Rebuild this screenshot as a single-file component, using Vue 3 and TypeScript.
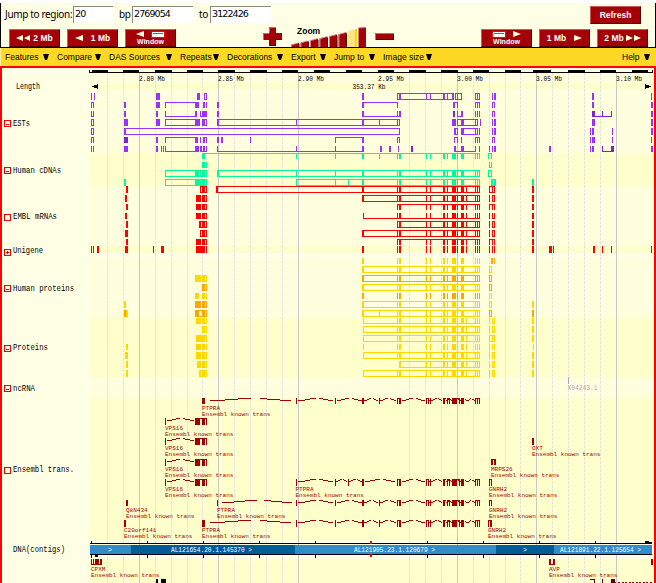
<script setup lang="ts">
interface Menu { label: string; w: number }
interface Row { y: number; h: number; c: string; d: string }
interface Label { x: number; y: number; t: string; w?: number }

const menus: Menu[] = [
  { label: 'Features', w: 44 }, { label: 'Compare', w: 44 }, { label: 'DAS Sources', w: 63 },
  { label: 'Repeats', w: 39 }, { label: 'Decorations', w: 56 }, { label: 'Export', w: 35 },
  { label: 'Jump to', w: 41 }, { label: 'Image size', w: 49 },
]

const PURPLE = '#9b30ff', INDIGO = '#7a26cc', GREEN = '#00fa9a', RED = '#ff0000'
const GOLD = '#ffd700', ORANGE = '#ffa500'

// Shared exon columns; W adds the extra exon seen in some tracks.
const X = 'b397,1 b399,2 b426,1 b430,1 b443,2 b447,1 b452,4 b457,1 b461,3 b475,1 b477,1 b479,1 '
const W = X + 'b466,1 '

// Tokens: bX,W solid bar; oA-B full box; nA-B box open at the bottom; uA-B box open at the top.
function shape(d: string, y: number, h: number): string {
  return d.trim().split(/\s+/).map((t) => {
    const [a, b] = t.slice(1).split(/[,-]/).map(Number)
    const r = (x: number, yy: number, w: number, hh: number) => `M${x} ${yy}h${w}v${hh}h${-w}z`
    if (t[0] === 'b') return r(a, y, b, h)
    let s = r(a, y, 1, h) + r(b - 1, y, 1, h)
    if (t[0] !== 'u') s += r(a, y, b - a, 1)
    if (t[0] !== 'n') s += r(a, y + h - 1, b - a, 1)
    return s
  }).join('')
}

const rows: Row[] = [
  { y: 93, h: 7, c: PURPLE, d: 'b91,1 b94,1 b156,4 b197,3 o204-207 b362,2 o397-454 b399,2 b426,1 b430,1 b443,2 b447,1 b452,2 o455-462 b457,1 o475-480 b477,1 b492,1 b494,2 b592,2 b651,1' },
  { y: 102, h: 6, c: PURPLE, d: 'n91-94 b124,2 b156,4 n165-198 b195,4 b203,2 b206,1 b217,2 b362,2 n362-398 b453,2 n453-458 n475-480 b477,1 n492-495 b592,2 b651,2' },
  { y: 111, h: 6, c: PURPLE, d: 'u91-94 b124,2 b156,2 u165-197 b195,2 u200-203 b203,2 b205,2 b217,2 b362,2 u362-400 b397,1 b399,2 b461,2 u457-463 b475,1 b477,1 b479,1 n492-495 b651,2' },
  { y: 111, h: 6, c: INDIGO, d: 'b453,2 b592,3 u592-612 b602,1' },
  { y: 119, h: 7, c: PURPLE, d: 'b91,1 o91-94 b124,4 b156,4 o165-198 b195,5 b202,3 o202-207 o217-400 b217,2 b296,1 b362,2 b379,1 b397,1 b452,4 o457-478 b461,3 b475,1 b477,1 b480,1 b492,1 b494,2 b592,3 b651,2' },
  { y: 128, h: 7, c: PURPLE, d: 'o91-94 o124-400 b124,2 o454-458 b454,2 o461-478 b461,3 b475,1 b479,1 b492,1 b494,2 b590,1 b592,2 b612,1 b651,2' },
  { y: 137, h: 6, c: PURPLE, d: 'n91-94 b156,2 n165-198 b195,2 b200,1 n203-207 b203,2 b217,2 b221,2 b250,1 n335-364 b362,2 n397-400 n454-458 b461,1 n475-480 b477,1 n492-495 b590,1 b592,3 b612,1 b651,1' },
  { y: 137, h: 6, c: INDIGO, d: 'b124,4' },
  { y: 146, h: 6, c: PURPLE, d: 'b91,1 b93,1 b124,4 b156,2 b161,1 b163,1 u165-198 b195,4 b200,1 u201-207 b203,2 u217-364 b296,1 b335,1 b362,2 b380,2 b389,2 b398,1 u454-476 b454,2 b461,3 b479,1 b489,1 b492,1 b494,2 b549,2 b590,1 b592,2 b651,2' },
  { y: 146, h: 6, c: INDIGO, d: 'b411,2 u602-613 b611,3' },

  { y: 153, h: 6, c: GREEN, d: X + 'b202,3' },
  { y: 153, h: 6, c: GREEN, d: 'n202-480 b296,1 b335,1 b362,2 b379,1 n488-492' },
  { y: 162, h: 6, c: GREEN, d: 'b202,3 u202-207 u489-492' },
  { y: 170, h: 7, c: GREEN, d: X + 'o165-207 b195,4 b200,1 b202,3 o217-480 b217,2 b296,1 b335,1 b362,2 o488-492' },
  { y: 179, h: 7, c: GREEN, d: X + 'b124,2 o165-207 b195,6 b202,3 o296-480 b335,1 b348,1 b362,2 b491,2 o491-496 b494,2 b532,2' },

  { y: 186, h: 7, c: RED, d: W + 'b126,2 o200-207 b202,3 o216-480 b216,2 b362,2 o489-495 b492,1 b532,2' },
  { y: 195, h: 7, c: RED, d: W + 'b125,2 b196,5 o202-207 b202,3 o362-480 b362,2 b489,1 o492-495 b532,2' },
  { y: 204, h: 6, c: RED, d: W + 'b126,2 b196,5 o202-207 b202,3 n397-480 n489-495 b492,1 b532,2' },
  { y: 213, h: 6, c: RED, d: W + 'b125,2 b196,5 o202-207 b202,3 u363-480 b489,1 u492-495 b532,2' },
  { y: 221, h: 7, c: RED, d: W + 'b126,2 o199-207 b200,1 b202,3 o397-480 b489,1 o492-495 b532,2' },
  { y: 230, h: 7, c: RED, d: W + 'b125,3 o200-207 b202,3 o362-480 b362,2 b489,1 o492-495 b532,2' },
  { y: 239, h: 6, c: RED, d: W + 'b126,2 b196,5 o202-207 b202,3 n397-480 n489-495 b492,1 b532,2' },
  { y: 246, h: 7, c: RED, d: W + 'b91,1 b93,1 b97,2 b125,3 b153,1 b161,3 b196,9 b206,1 b362,2 b489,1 b492,1 b494,1 b532,2 b549,3 b553,1 b593,2 b602,1 b611,1 b651,1' },

  { y: 258, h: 6, c: GOLD, d: X + 'b362,2' },
  { y: 258, h: 6, c: ORANGE, d: 'b491,2 b494,1' },
  { y: 266, h: 7, c: GOLD, d: X + 'o362-480 b362,2 o489-492' },
  { y: 275, h: 7, c: ORANGE, d: X + 'o362-480 b362,2 o489-492' },
  { y: 275, h: 7, c: GOLD, d: 'b195,6 o202-207 b202,3' },
  { y: 284, h: 7, c: GOLD, d: X + 'o362-480 b362,2' },
  { y: 284, h: 7, c: ORANGE, d: 'b202,3 o202-207 o489-492' },
  { y: 293, h: 6, c: ORANGE, d: X + 'b362,2' },
  { y: 293, h: 6, c: GOLD, d: 'b195,4 b202,3 b206,1 b489,1 b491,1' },
  { y: 301, h: 7, c: GOLD, d: X + 'b124,2 o362-480 b362,2 o489-492 b532,2' },
  { y: 301, h: 7, c: ORANGE, d: 'b195,6 b202,3 o202-207' },
  { y: 310, h: 7, c: GOLD, d: X + 'b126,2 o362-480 b362,2 b379,1' },
  { y: 310, h: 7, c: ORANGE, d: 'b124,2 o195-207 b195,4 b202,3 o489-492 b532,2' },

  { y: 318, h: 6, c: GOLD, d: W + 'b196,5 u202-207 b202,3 u363-480 b489,1 u492-495 b532,2' },
  { y: 326, h: 7, c: GOLD, d: W + 'b202,3 o202-207 o363-480 b489,1 o492-495 b532,2' },
  { y: 335, h: 7, c: GOLD, d: W + 'b196,9 o202-207 o363-480 o489-495 b492,1 b532,2' },
  { y: 344, h: 6, c: GOLD, d: W + 'b126,2 b196,5 b202,3 b206,1 b363,1 b489,1 b492,1 b494,1 b533,1' },
  { y: 352, h: 7, c: GOLD, d: W + 'b125,3 b196,5 o202-207 b202,3 o363-480 b489,1 o492-495 b532,2' },
  { y: 361, h: 7, c: GOLD, d: W.replace('b397,1 ', '') + 'b126,2 b197,4 o202-207 b202,3 o399-480 b489,1 o492-495 b532,2' },
  { y: 370, h: 7, c: GOLD, d: W + 'b126,2 o199-207 b200,1 b202,3 o363-480 b489,1 o492-495 b532,2' },
]

// Transcript exons and the humped introns that join them.
const MAROON = '#a00000'
const vps = 'b165,1 b195,4 n199-207 b202,2 b204,1'
const tail = 'n397-401 b399,2 b426,1 n426-429 b430,1 b443,2 n447-450 b452,4 n456-460 b461,3 n475-480 b477,1 '
const exons: Row[] = [
  { y: 398, h: 6, c: MAROON, d: tail + 'b202,3 b296,1 b335,1 b362,2 b379,1' },
  ...[418, 438, 459, 479].map((y) => ({ y, h: 7, c: MAROON, d: vps })),
  { y: 438, h: 7, c: MAROON, d: 'b532,2' },
  { y: 459, h: 6, c: MAROON, d: 'n491-496 b491,2 b494,2' },
  { y: 479, h: 7, c: MAROON, d: tail + 'b296,1 b335,1 b348,1 b362,2 n489-492' },
  { y: 500, h: 6, c: MAROON, d: tail + 'b126,2 b217,1 b296,1 b335,1 b362,2 b379,1 n489-492' },
  { y: 520, h: 7, c: MAROON, d: tail + 'b124,2 b202,3 b296,1 b335,1 b362,2 b379,1 n488-492 b490,2' },
  { y: 559, h: 6, c: MAROON, d: 'u91-102 b93,1 b95,4 b100,1 u549-555 b549,2 b553,2 b651,2' },
]
const tailStops = [400, 426, 430, 443, 447, 452, 461, 467, 475]
function humps(y: number, xs: number[]): string {
  let s = ''
  for (let i = 0; i < xs.length - 1; i++) {
    const a = xs[i], g = xs[i + 1] - a
    if (g < 4) continue
    const p = (f: number) => Math.round(a + g * f)
    s += `M${p(0.06)} ${y + 2.5}H${p(0.22)}M${p(0.22)} ${y + 1.5}H${p(0.36)}M${p(0.36)} ${y + 0.5}H${p(0.5)}`
    s += `M${p(0.6)} ${y + 0.5}H${p(0.68)}M${p(0.68)} ${y + 1.5}H${p(0.82)}M${p(0.82)} ${y + 2.5}H${p(0.95)}`
  }
  return s
}
const introns: string[] = [
  humps(398, [205, 296, 335, 363, 379, 397, ...tailStops]),
  ...[418, 438, 459, 479].map((y) => humps(y, [165, 195])),
  humps(479, [296, 335, 348, 363, 397, ...tailStops]),
  humps(500, [217, 296, 335, 363, 379, 397, ...tailStops]),
  humps(520, [205, 296, 335, 363, 379, 397, ...tailStops]),
]

const genes: Label[] = [
  { x: 202, y: 398, t: 'PTPRA' },
  { x: 165, y: 418, t: 'VPS16' }, { x: 165, y: 438, t: 'VPS16' }, { x: 165, y: 459, t: 'VPS16' }, { x: 165, y: 479, t: 'VPS16' },
  { x: 532, y: 438, t: 'OXT' }, { x: 491, y: 459, t: 'MRPS26' },
  { x: 295.5, y: 479, t: 'PTPRA' }, { x: 489, y: 479, t: 'GNRH2' }, { x: 489, y: 500, t: 'GNRH2' },
  { x: 126, y: 500, t: 'Q8N434' }, { x: 217, y: 500, t: 'PTPRA' },
  { x: 124, y: 520, t: 'C20orf141' }, { x: 202, y: 520, t: 'PTPRA' }, { x: 488, y: 520, t: 'GNRH2' },
  { x: 91, y: 559, t: 'CPXM' }, { x: 549, y: 559, t: 'AVP' },
]

const majors = [139, 218, 298, 457, 536, 616]
const minors = [107, 123, 155, 171, 187, 202, 234, 250, 266, 282, 409, 425, 441, 473, 489, 505, 520, 552, 568, 584, 600]
const ruler = [[92, 16], [123, 16], [155, 17], [187, 16], [218, 17], [250, 17], [282, 16], [314, 16], [346, 16], [378, 16], [409, 17], [441, 17], [473, 16], [505, 16], [533, 18], [568, 17], [600, 16], [632, 16]]
const bands: [number, number, string][] = [
  [68, 15, '#ffffdd'], [83, 6, '#ffffcc'], [89, 64, '#ffffdd'], [153, 33, '#ffffcc'], [186, 60, '#ffffdd'],
  [246, 7, '#ffffcc'], [253, 5, '#ffffe8'], [258, 60, '#ffffdd'], [318, 59, '#ffffcc'], [377, 21, '#ffffdd'],
  [398, 142, '#ffffcc'], [540, 19, '#ffffe2'], [559, 24, '#ffffcc'],
]
const scale: Label[] = [
  { x: 139, y: 81, t: '2.80 Mb' }, { x: 218, y: 81, t: '2.85 Mb' }, { x: 298, y: 81, t: '2.90 Mb' }, { x: 378, y: 81, t: '2.95 Mb' },
  { x: 457, y: 81, t: '3.00 Mb' }, { x: 536, y: 81, t: '3.05 Mb' }, { x: 616, y: 81, t: '3.10 Mb' },
]
const tracks: Label[] = [
  { x: 16, y: 89, t: 'Length', w: 24 }, { x: 13, y: 126, t: 'ESTs', w: 17 }, { x: 13, y: 172.5, t: 'Human cDNAs', w: 48 },
  { x: 13, y: 219, t: 'EMBL mRNAs', w: 44 }, { x: 13, y: 253, t: 'Unigene', w: 30 }, { x: 13, y: 291, t: 'Human proteins', w: 61 },
  { x: 13, y: 350, t: 'Proteins', w: 35 }, { x: 13, y: 390.5, t: 'ncRNA', w: 22 }, { x: 13, y: 472, t: 'Ensembl trans.', w: 61 },
  { x: 13, y: 552, t: 'DNA(contigs)', w: 52 },
]
const toggles: { y: number; k: string }[] = [
  { y: 120, k: '-' }, { y: 167, k: '-' }, { y: 214, k: '' }, { y: 249, k: '+' }, { y: 285, k: '-' },
  { y: 345, k: '-' }, { y: 385, k: '-' }, { y: 467, k: '' },
]
const contigs: [number, number, string][] = [[90, 41, '#338bcc'], [131, 164, '#005a9c'], [295, 201, '#338bcc'], [496, 58, '#005a9c'], [554, 98, '#338bcc']]
const contigNames: Label[] = [
  { x: 171, y: 552, t: 'AL121654.20.1.145370 >', w: 81 }, { x: 354, y: 552, t: 'AL121905.23.1.120679 >', w: 81 },
  { x: 560, y: 552, t: 'AL121891.22.1.125654 >', w: 81 }, { x: 108, y: 552, t: '>', w: 4 }, { x: 523, y: 552, t: '>', w: 4 },
]
const contigTicks = [91, 147, 203, 259, 315, 427, 483, 539, 595]
const zoomBars = [0, 1, 2, 3, 4, 5]
</script>

<template>
  <div class="page">
    <header class="panel">
      <div class="jump">
        <label>Jump to region:</label><span class="field chr">20</span>
        <label class="bp">bp</label><span class="field">2769054</span>
        <label class="to">to</label><span class="field">3122426</span>
        <span class="btn refresh">Refresh</span>
      </div>
      <div class="nav">
        <span class="btn"><svg width="15" height="7"><path d="M7 0v6L0 3zM14 0v6L8 3z" /></svg>2 Mb</span>
        <span class="btn wide"><svg width="8" height="7"><path d="M8 0v6L0 3z" /></svg>1 Mb</span>
        <span class="btn window">
          <svg width="30" height="8"><path d="M8 0v6L0 3z" /><rect x="15.5" y=".5" width="13" height="6" fill="#fff" stroke="#f00" /><path d="M17 2.5h10" class="blue" /></svg>
          <b>Window</b>
        </span>
        <svg class="plus" width="19" height="19"><path d="M6 0h7v6h6v7h-6v6H6v-6H0V6h6z" fill="#a40008" /><path d="M6.5 6V.5H13M.5 13V6.5H6" fill="none" stroke="#d06868" /><path d="M7 18.5h5.500V13M13 12.500h5.500V7" fill="none" stroke="#500" /></svg>
        <div class="zoom">
          <b>Zoom</b>
          <svg width="76" height="20">
            <g v-for="i in zoomBars" :key="i">
              <path :d="`M${i * 9.5} ${18 - i * 2.1}l8 -2.2V20h-8z`" fill="#a40008" />
              <path :d="`M${i * 9.5} ${18 - i * 2.1}l7 -1.9M${i * 9.5 + 0.5} ${18 - i * 2.1}V20`" stroke="#d08080" />
              <path :d="`M${i * 9.5 + 8} ${17 - i * 2.1}V20`" stroke="#400" />
            </g>
            <path d="M57 4l9-2v18h-9z" fill="#ffe680" /><path d="M64 2h2v18h-2z" fill="#ffd700" />
            <path d="M67 1l8-1v20h-8z" fill="#a40008" /><path d="M67.500 20V1L75 .5" stroke="#d08080" fill="none" />
          </svg>
        </div>
        <svg class="minus" width="19" height="7"><rect width="19" height="7" fill="#a40008" /><path d="M.5 7V.5H19" fill="none" stroke="#d06868" /><path d="M1 6.5h17.500V1" fill="none" stroke="#500" /></svg>
        <span class="btn window right">
          <svg width="30" height="8"><rect x=".5" y=".5" width="13" height="6" fill="#fff" stroke="#f00" /><path d="M2 2.500h10" class="blue" /><path d="M21 0v6l8-3z" /></svg>
          <b>Window</b>
        </span>
        <span class="btn wide">1 Mb<svg width="8" height="7"><path d="M0 0v6l8-3z" /></svg></span>
        <span class="btn">2 Mb<svg width="15" height="7"><path d="M0 0v6l7-3zM8 0v6l7-3z" /></svg></span>
      </div>
    </header>
    <nav class="menu">
      <span v-for="m in menus" :key="m.label" class="item" :style="{ width: m.w + 'px' }">
        {{ m.label }}<svg width="6" height="6"><path d="M0 0h6L4 6H2z" /></svg>
      </span>
      <span class="item help">Help<svg width="6" height="6"><path d="M0 0h6L4 6H2z" /></svg></span>
    </nav>
    <main class="view">
      <svg class="chart" width="652" height="515" viewBox="2 68 652 515">
        <rect v-for="b in bands" :key="b[0]" x="90" :y="b[0]" width="564" :height="b[1]" :fill="b[2]" />
        <path v-for="x in minors" :key="x" class="minor" :d="`M${x + 0.5} 73V583`" />
        <path v-for="x in majors" :key="x" class="major" :d="`M${x + 0.5} 73V583`" />
        <path d="M89 70h1v2h562v-2h1v3H89z" />
        <rect v-for="r in ruler" :key="r[0]" :x="r[0]" y="70" :width="r[1]" height="3" />
        <path d="M92 86.500l6-2.500v5zM645 84l6 2.500-6 2.500z" />
        <text v-for="s in scale" :key="s.t" class="tick" :x="s.x" :y="s.y" textLength="26" lengthAdjust="spacingAndGlyphs">{{ s.t }}</text>
        <text class="tick" x="352.500" y="88.500" textLength="33" lengthAdjust="spacingAndGlyphs">353.37 Kb</text>

        <text v-for="t in tracks" :key="t.t" class="track" :x="t.x" :y="t.y" :textLength="t.w" lengthAdjust="spacingAndGlyphs">{{ t.t }}</text>
        <g v-for="t in toggles" :key="t.y" class="toggle">
          <rect x="4.5" :y="t.y + 0.5" width="6" height="6" />
          <path v-if="t.k === '-'" :d="`M6 ${t.y + 4.5}h3`" />
          <path v-if="t.k === '+'" :d="`M6 ${t.y + 3.5}h3M7.5 ${t.y + 2}v3`" />
        </g>

        <path v-for="(r, i) in rows" :key="'r' + i" :d="shape(r.d, r.y, r.h)" :fill="r.c" />
        <path v-for="(p, i) in introns" :key="'i' + i" class="intron" :d="p" />
        <path v-for="(r, i) in exons" :key="'e' + i" :d="shape(r.d, r.y, r.h)" :fill="r.c" />
        <g v-for="(g, i) in genes" :key="'g' + i" class="gene">
          <text :x="g.x" :y="g.y + 12">{{ g.t }}</text>
          <text :x="g.x" :y="g.y + 18">Ensembl known trans</text>
        </g>
        <path d="M568 377h1v7h-1z" fill="#c896c8" />
        <text class="nc" x="567.500" y="390" textLength="30" lengthAdjust="spacingAndGlyphs">X04243.1</text>

        <path d="M90 543h562v1H90zM90 554h562v1H90zM645 541h4v1h3v2h-7zM95 555h3v2h-3z" />
        <rect v-for="c in contigs" :key="c[0]" :x="c[0]" y="545" :width="c[1]" height="9" :fill="c[2]" />
        <path v-for="x in contigTicks" :key="x" :d="`M${x} 541h1v2h-1zM${x} 555h1v3h-1z`" />
        <path d="M370 541h2v3h-2zM370 554h2v3h-2z" fill="#f00" />
        <text v-for="(c, i) in contigNames" :key="'c' + i" class="contig" :x="c.x" :y="c.y" :textLength="c.w" lengthAdjust="spacingAndGlyphs">{{ c.t }}</text>
        <path d="M156 579h2v4h-2zM161 579h5v4h-5z" />
        <path d="M590 579h5v4h-1v-3h-4zM602 579h1v4h-1zM611 579h4v3h1v1h-5z" fill="#600000" />
        <path d="M618 582.500h34" stroke="#a00000" stroke-dasharray="2 1.500" />
      </svg>
    </main>
  </div>
</template>

<style>
body { margin: 0; background: #fff; overflow: hidden; }
</style>

<style scoped>
.page { width: 656px; height: 583px; padding-top: 3px; box-sizing: border-box; display: flex; flex-direction: column; font-family: "DejaVu Sans", sans-serif; color: #000; overflow: hidden; }
.panel { height: 45px; box-sizing: border-box; background: #ffffe6; border: solid #000; border-width: 0 1px 1px; padding: 3px 7px 0 4px; display: flex; flex-direction: column; gap: 4px; }
.jump { display: flex; height: 19px; align-items: flex-start; font: 10px/17px "Noto Sans", sans-serif; white-space: nowrap; }
.jump label { width: 68px; letter-spacing: -0.35px; }
.jump label.bp { width: 13px; margin-left: 6px; }
.jump label.to { width: 11px; margin-left: 6px; }
.field { width: 61px; height: 17px; box-sizing: border-box; border: solid #888; border-width: 1px 0 0 1px; background: #fff; font: 9.5px/14px "DejaVu Sans", sans-serif; letter-spacing: -0.9px; padding-left: 1px; }
.field.chr { width: 40px; }
.btn { width: 51px; height: 18px; box-sizing: border-box; background: #a40008; border: 1px solid; border-color: #cf5c5c #500000 #500000 #cf5c5c; color: #fff; font: bold 8.5px/16px "Liberation Sans", sans-serif; display: flex; align-items: center; justify-content: center; gap: 2px; white-space: nowrap; }
.btn svg { fill: #ffffdc; }
.btn .blue { stroke: #3f6fa8; fill: none; }
.btn.wide { gap: 8px; }
.refresh { margin-left: auto; margin-right: 7px; font-size: 8.5px; }
.nav { display: flex; height: 18px; padding-left: 4px; }
.nav .btn + .btn { margin-left: 7px; }
.nav .btn { flex: none; }
.nav .window { flex-direction: column; gap: 0; padding-top: 1px; }
.window b { font-size: 7px; line-height: 8px; }
.nav .plus { margin: -2px 9px 0 87px; flex: none; }
.zoom { width: 76px; height: 20px; margin-top: -2px; display: grid; flex: none; }
.zoom b { grid-area: 1 / 1; margin: -1px 0 0 6px; font: bold 8.5px/10px "Liberation Sans", sans-serif; }
.zoom svg { grid-area: 1 / 1; }
.minus { margin: 4px 0 0 8px; flex: none; }
.nav .btn.right { margin-left: auto; }
.menu { height: 18px; background: #fdd926; display: flex; align-items: center; gap: 8px; padding: 0 6px 0 4px; font: 8.5px/16px "Liberation Sans", sans-serif; border-left: 1px solid #fff2a0; box-sizing: border-box; }
.item { display: flex; justify-content: space-between; align-items: center; white-space: nowrap; flex: none; }
.item.help { width: 28px; margin-left: auto; }
.view { height: 517px; box-sizing: border-box; border: solid #f00; border-width: 2px 2px 0; background: #ffffe6; }
.chart { display: block; shape-rendering: crispEdges; }
.minor { stroke: #e2e2e2; stroke-dasharray: 3 1; }
.major { stroke: #c8c8c8; }
text { font-family: "Liberation Mono", monospace; white-space: pre; }
.tick { font-size: 8px; }
.track { font-size: 9px; }
.toggle { fill: none; stroke: #e00; }
.intron { stroke: #a00000; fill: none; stroke-width: 1; }
.gene { fill: #a00000; font-size: 6px; }
.nc { fill: #c896c8; font-size: 7.5px; }
.contig { fill: #fff; font-size: 7px; }
</style>
